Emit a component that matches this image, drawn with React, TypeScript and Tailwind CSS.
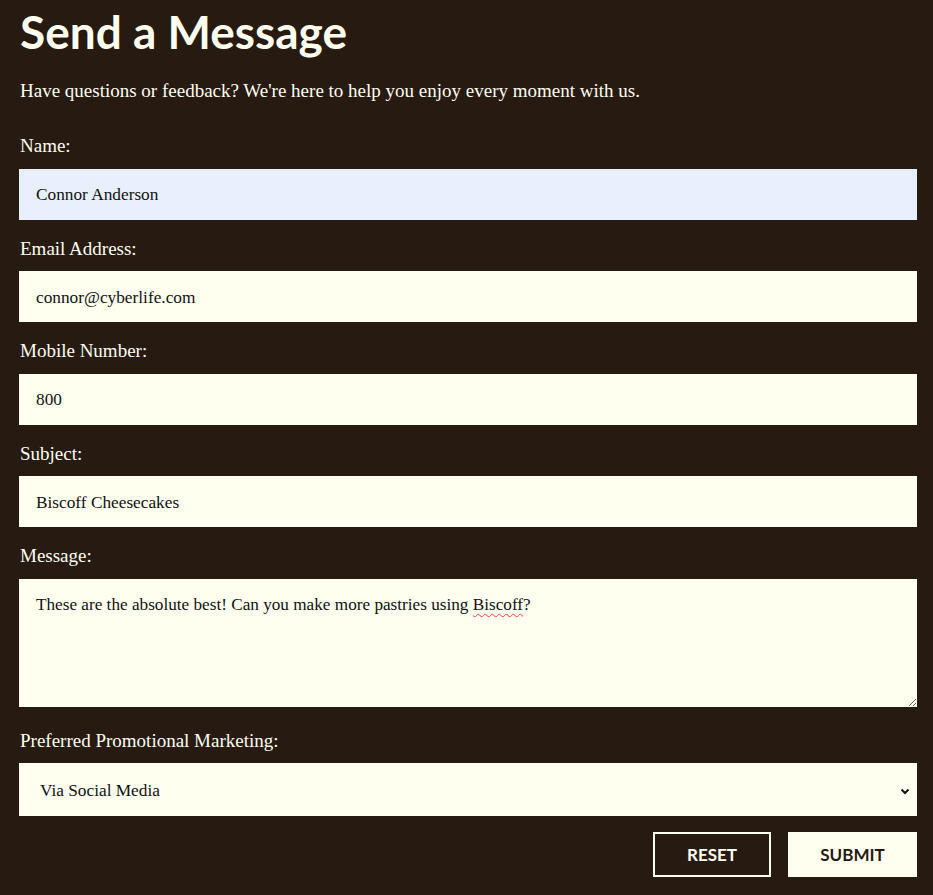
import React from "react";

const serif = { fontFamily: '"Liberation Serif", "DejaVu Serif", serif' };

function Field({ label, value, bg = "bg-[#fffff0]" }: { label: string; value: string; bg?: string }) {
  return (
    <div className="flex flex-col">
      <div className="h-[24px] leading-[24px] text-[19px] pl-px mb-[10.5px]">{label}</div>
      <div className={`h-[51px] ${bg} flex items-center pl-[17px] pt-[2px] text-[17.3px] text-[#111]`}>{value}</div>
    </div>
  );
}

export default function App() {
  return (
    <div className="min-h-[895px] w-full bg-[#271a11] text-[#fffff0]" style={serif}>
      <div className="pl-[19px] pr-[16px] pt-[1px]">
        <h1
          className="text-[46px] font-bold leading-[62px] pl-px"
          style={{ fontFamily: 'Lato, "Open Sans", sans-serif' }}
        >
          Send a Message
        </h1>
        <p className="mt-[16px] text-[19px] leading-[24px] pl-px">
          Have questions or feedback? We're here to help you enjoy every moment with us.
        </p>
        <div className="mt-[31px] flex flex-col gap-[17px]">
          <Field label="Name:" value="Connor Anderson" bg="bg-[#e8f0fe]" />
          <Field label="Email Address:" value="connor@cyberlife.com" />
          <Field label="Mobile Number:" value="800" />
          <Field label="Subject:" value="Biscoff Cheesecakes" />
          <div className="flex flex-col">
            <div className="h-[24px] leading-[24px] text-[19px] pl-px mb-[10.5px]">Message:</div>
            <div className="h-[128px] bg-[#fffff0] resize-y overflow-auto pl-[17px] pt-[14px] text-[17.2px] leading-[24px] text-[#111]">
              These are the absolute best! Can you make more pastries using{" "}
              <span className="underline decoration-wavy decoration-[#ff3b3b] decoration-1 underline-offset-[3px]">Biscoff</span>?
            </div>
          </div>
          <div className="flex flex-col mt-[5px]">
            <div className="h-[24px] leading-[24px] text-[19px] pl-px mb-[10.5px]">Preferred Promotional Marketing:</div>
            <div className="h-[53px] bg-[#fffff0] flex items-center justify-between pl-[21px] pr-[5px] pt-[2px] text-[17.3px] text-[#111]">
              <span>Via Social Media</span>
              <svg width="12" height="12" viewBox="0 0 12 12" className="mr-[1px]">
                <path d="M2.5 4.5 L6 8 L9.5 4.5" fill="none" stroke="#111" strokeWidth="2" />
              </svg>
            </div>
          </div>
        </div>
        <div
          className="mt-[16px] flex justify-end gap-[17px]"
          style={{ fontFamily: 'Lato, "Open Sans", sans-serif' }}
        >
          <button className="w-[118px] h-[45px] border-2 border-[#fffff0] text-[#fffff0] text-[17px] font-bold">
            RESET
          </button>
          <button className="w-[129px] h-[45px] bg-[#fffff0] text-[#271a11] text-[17px] font-bold">
            SUBMIT
          </button>
        </div>
      </div>
    </div>
  );
}
